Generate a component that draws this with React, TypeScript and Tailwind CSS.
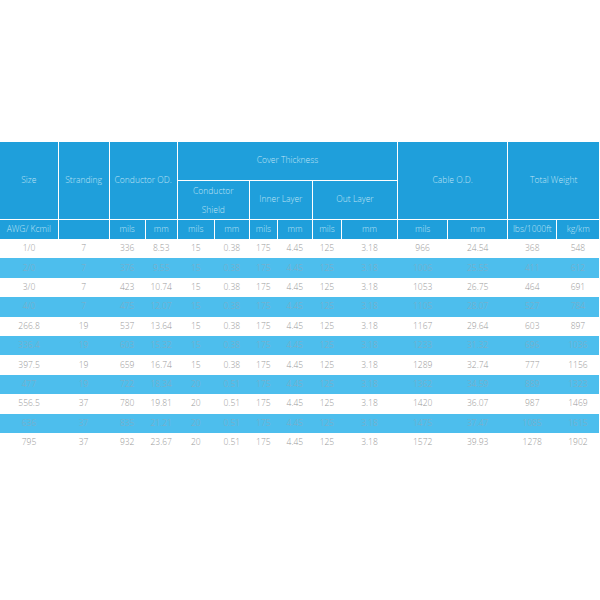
const rows = [
  ['1/0', '7', '336', '8.53', '15', '0.38', '175', '4.45', '125', '3.18', '966', '24.54', '368', '548'],
  ['2/0', '7', '376', '9.55', '15', '0.38', '175', '4.45', '125', '3.18', '1006', '25.55', '411', '612'],
  ['3/0', '7', '423', '10.74', '15', '0.38', '175', '4.45', '125', '3.18', '1053', '26.75', '464', '691'],
  ['4/0', '7', '475', '12.07', '15', '0.38', '175', '4.45', '125', '3.18', '1105', '28.07', '527', '784'],
  ['266.8', '19', '537', '13.64', '15', '0.38', '175', '4.45', '125', '3.18', '1167', '29.64', '603', '897'],
  ['336.4', '19', '603', '15.32', '15', '0.38', '175', '4.45', '125', '3.18', '1233', '31.32', '696', '1036'],
  ['397.5', '19', '659', '16.74', '15', '0.38', '175', '4.45', '125', '3.18', '1289', '32.74', '777', '1156'],
  ['477', '19', '722', '18.34', '20', '0.51', '175', '4.45', '125', '3.18', '1362', '34.59', '889', '1323'],
  ['556.5', '37', '780', '19.81', '20', '0.51', '175', '4.45', '125', '3.18', '1420', '36.07', '987', '1469'],
  ['636', '37', '835', '21.21', '20', '0.51', '175', '4.45', '125', '3.18', '1475', '37.47', '1085', '1615'],
  ['795', '37', '932', '23.67', '20', '0.51', '175', '4.45', '125', '3.18', '1572', '39.93', '1278', '1902'],
];

const widths = [58, 51, 36, 32, 37, 35, 28, 35, 29, 56, 50, 60, 49, 42];

const units = ['AWG/ Kcmil', '', 'mils', 'mm', 'mils', 'mm', 'mils', 'mm', 'mils', 'mm', 'mils', 'mm', 'lbs/1000ft', 'kg/km'];

const th = 'border border-white font-light text-center align-middle p-0';

export default function App() {
  return (
    <div className="min-h-[600px] w-[600px] bg-white pt-[142px] font-['Open_Sans',sans-serif] text-[8.5px]">
      <table className="w-[599px] table-fixed border-collapse">
        <colgroup>
          {widths.map((w, i) => (
            <col key={i} style={{ width: w }} />
          ))}
        </colgroup>
        <thead className="bg-[#1f9fdb] text-[#bfe2f4]">
          {/* Group headers */}
          <tr className="h-[38px]">
            <th rowSpan={2} className={`${th} border-t-0 border-l-0`}>Size</th>
            <th rowSpan={2} className={`${th} border-t-0`}>Stranding</th>
            <th rowSpan={2} colSpan={2} className={`${th} border-t-0`}>Conductor OD.</th>
            <th colSpan={6} className={`${th} border-t-0`}>Cover Thickness</th>
            <th rowSpan={2} colSpan={2} className={`${th} border-t-0`}>Cable O.D.</th>
            <th rowSpan={2} colSpan={2} className={`${th} border-t-0 border-r-0`}>Total Weight</th>
          </tr>
          <tr className="h-[39px]">
            <th colSpan={2} className={`${th} leading-[19px]`}>
              Conductor
              <br />
              Shield
            </th>
            <th colSpan={2} className={th}>Inner Layer</th>
            <th colSpan={2} className={th}>Out Layer</th>
          </tr>
          {/* Units */}
          <tr className="h-[20px]">
            {units.map((u, i) => (
              <th
                key={i}
                className={`${th} border-b-0 ${i === 0 ? 'border-l-0' : ''} ${i === units.length - 1 ? 'border-r-0' : ''}`}
              >
                {u}
              </th>
            ))}
          </tr>
        </thead>
        <tbody>
          {rows.map((row, r) => (
            <tr
              key={r}
              className={`h-[19.4px] ${r % 2 === 1 ? 'bg-[#4dbeed] text-[#86abc2]' : 'bg-white text-[#9a9a9a]'}`}
            >
              {row.map((cell, c) => (
                <td key={c} className="p-0 text-center align-middle font-light">
                  {cell}
                </td>
              ))}
            </tr>
          ))}
        </tbody>
      </table>
    </div>
  );
}
